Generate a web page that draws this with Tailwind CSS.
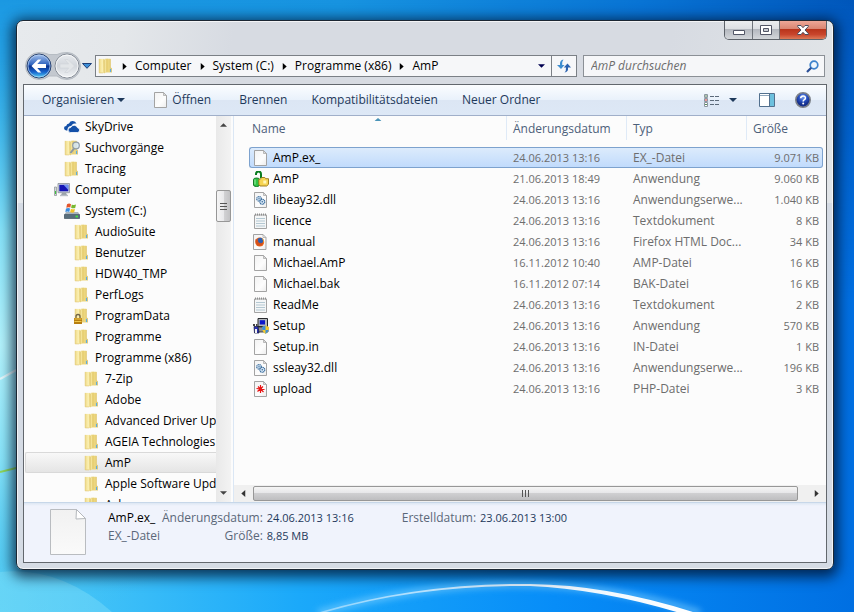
<!DOCTYPE html>
<html lang="de">
<head>
    <meta charset="UTF-8">
    <meta name="viewport" content="width=device-width, initial-scale=1.0">
    <title>AmP</title>
    <script src="https://cdn.jsdelivr.net/npm/@tailwindcss/browser@4"></script>
</head>
<body class="relative isolate flex h-screen overflow-hidden bg-[#0a84e6] pt-5 pr-5 pb-[42px] pl-4 font-['Open_Sans','Noto_Sans',sans-serif] text-[12px] leading-4 text-black">

    <!-- Desktop wallpaper -->
    <svg class="absolute inset-0 -z-10 h-full w-full" viewBox="0 0 854 612" preserveAspectRatio="none" aria-hidden="true">
        <defs>
            <linearGradient id="wpBottom"><stop offset="0" stop-color="#52cdf6"/><stop offset=".35" stop-color="#1ba9fa"/><stop offset=".65" stop-color="#078df8"/><stop offset="1" stop-color="#006fe2"/></linearGradient>
            <linearGradient id="wpTop"><stop offset="0" stop-color="#1b98e2"/><stop offset=".4" stop-color="#1793e0"/><stop offset=".75" stop-color="#0873d4"/><stop offset="1" stop-color="#0056ba"/></linearGradient>
            <linearGradient id="fade" x2="0" y2="1"><stop offset="0" stop-color="#fff"/><stop offset="1" stop-color="#fff" stop-opacity="0"/></linearGradient>
            <mask id="topMask"><rect width="854" height="300" fill="url(#fade)"/></mask>
            <radialGradient id="wpGlow" gradientUnits="userSpaceOnUse" cx="0" cy="345" r="285"><stop offset="0" stop-color="#b4f4fd"/><stop offset=".4" stop-color="#8ee8fb" stop-opacity=".9"/><stop offset="1" stop-color="#3cbcee" stop-opacity="0"/></radialGradient>
            <linearGradient id="arc"><stop offset="0" stop-color="#fff" stop-opacity=".4"/><stop offset=".6" stop-color="#fff" stop-opacity=".9"/><stop offset="1" stop-color="#fff"/></linearGradient>
            <filter id="soft" x="-10%" y="-50%" width="120%" height="200%"><feGaussianBlur stdDeviation="3"/></filter>
        </defs>
        <rect width="854" height="612" fill="url(#wpBottom)"/>
        <rect width="854" height="300" fill="url(#wpTop)" mask="url(#topMask)"/>
        <rect width="854" height="612" fill="url(#wpGlow)"/>
        <path d="M0 572Q60 566 112 612H0z" fill="#8ee4fa" opacity=".35"/>
        <path d="M318 613Q520 556 700 613" fill="none" stroke="#7fd0ff" stroke-width="7" opacity=".6" filter="url(#soft)"/>
        <path d="M320 612Q420 583 530 584Q610 585 696 613L680 613Q600 589 530 586Q420 585 326 612z" fill="url(#arc)"/>
        <path d="M0 379L20 368" stroke="#fff" stroke-width="2" opacity=".7"/>
        <path d="M0 472L20 467" stroke="#8fd85a" stroke-width="2"/>
    </svg>

    <!-- Icon set -->
    <svg class="absolute h-0 w-0" aria-hidden="true">
        <defs>
            <linearGradient id="gFold"><stop offset="0" stop-color="#f0db86"/><stop offset=".6" stop-color="#fbf0b4"/><stop offset="1" stop-color="#e6cd70"/></linearGradient>
            <linearGradient id="gFront"><stop offset="0" stop-color="#cfae48"/><stop offset=".35" stop-color="#f9eca8"/><stop offset="1" stop-color="#dfc25e"/></linearGradient>
            <linearGradient id="gPage" x2="1" y2="1"><stop offset="0" stop-color="#f2f2f2"/><stop offset=".6" stop-color="#fdfdfd"/><stop offset="1" stop-color="#ececec"/></linearGradient>
            <linearGradient id="gBack" x2="0" y2="1"><stop offset="0" stop-color="#a8c4ee"/><stop offset=".45" stop-color="#2d62bd"/><stop offset=".5" stop-color="#0a328c"/><stop offset=".75" stop-color="#1763cc"/><stop offset="1" stop-color="#58dcfb"/></linearGradient>
            <linearGradient id="gFwd" x2="0" y2="1"><stop offset="0" stop-color="#e8ebee"/><stop offset=".5" stop-color="#d2d6dc"/><stop offset="1" stop-color="#f2f4f6"/></linearGradient>
            <radialGradient id="gHelp" cy=".3"><stop offset="0" stop-color="#7ba0ee"/><stop offset=".6" stop-color="#2850c0"/><stop offset="1" stop-color="#16308c"/></radialGradient>
            <linearGradient id="gBig" x2="0" y2="1"><stop offset="0" stop-color="#f1f1f1"/><stop offset="1" stop-color="#fafafa"/></linearGradient>
        </defs>
        <symbol id="i-folder" viewBox="0 0 16 16">
            <path d="M7 .8h5.500v8.700l1.200.8v4.200H7z" fill="#ecd67e"/>
            <path d="M12.300 1v8.500l1.200.8v4" fill="none" stroke="#dcc064" stroke-width=".7"/>
            <path d="M1.200 .9h5.300v14H1.200z" fill="url(#gFold)"/>
            <path d="M1.200 .9v14h4" fill="none" stroke="#dfc36a" stroke-width=".6"/>
            <path d="M5.800 2.200L9.300.6v13L6 15.600z" fill="url(#gFront)"/>
            <path d="M12.500 10.800v3.200" stroke="#5cade6" stroke-width="1.100"/>
        </symbol>
        <symbol id="i-search-folder" viewBox="0 0 16 16">
            <use href="#i-folder"/>
            <path d="M10 8.500L6.500 13" stroke="#8a98a4" stroke-width="2"/>
            <circle cx="12" cy="5.500" r="3.300" fill="#d5e8f5" fill-opacity=".85" stroke="#8e9ca8" stroke-width="1.200"/>
        </symbol>
        <symbol id="i-lock-folder" viewBox="0 0 16 16">
            <use href="#i-folder"/>
            <path d="M2 10.500V8.500a2 2 0 0 1 4 0v2" fill="none" stroke="#6e6248" stroke-width="1.300"/>
            <path d="M0 10h8v6H0z" fill="#b77e10"/><path d="M.5 11h7M.5 13.500h7" stroke="#f0c84c"/>
        </symbol>
        <symbol id="i-sky" viewBox="0 0 16 16">
            <path d="M3.600 11.500H2.500a2.300 2.300 0 0 1-.3-4.600A3 3 0 0 1 5 4.500a4 4 0 0 1 7.500.300C9 4 7.500 6 7.400 7 5 6.800 3.200 9 3.600 11.500z" fill="#1450a8"/>
            <path d="M6.500 13.500a2.500 2.500 0 0 1 .2-5 3.700 3.700 0 0 1 6.900.3 2.400 2.400 0 0 1 .2 4.700z" fill="#1450a8" stroke="#fff" stroke-width=".8"/>
        </symbol>
        <symbol id="i-computer" viewBox="0 0 16 16">
            <path d="M.5 5h2v8.500h-2z" fill="#d4d8da" stroke="#8a9094" stroke-width=".7"/><path d="M1 9h1v3H1z" fill="#3ec23e"/>
            <path d="M4 1.500h11.500v9.200H4z" fill="#cfd6de" stroke="#868e98" stroke-width=".8"/>
            <path d="M5.300 2.800h9v6.500h-9z" fill="#1414b4"/><path d="M9.500 2.800h4.800V8z" fill="#6e90f0"/>
            <path d="M8 10.700h4l1 2.300H7z" fill="#9aa2aa"/><path d="M6 13.500h8" stroke="#b8bec4" stroke-width="1.400"/>
        </symbol>
        <symbol id="i-drive" viewBox="0 0 16 16">
            <path d="M2 9h12l2 3v3.500H0V12z" fill="#a9b4bc"/><path d="M.5 11.500h15v4H.5z" fill="#586e7c" stroke="#3f525e" stroke-width=".6"/>
            <path d="M11.500 13.500h2.500" stroke="#44e044" stroke-width="1.800"/>
            <path d="M3 1.300Q5 0 7 1.200L6.300 4.600Q4.500 3.800 2.300 4.700z" fill="#e4552c"/>
            <path d="M7.800 1.500Q10 2.500 12 1.600L11.200 5Q9 5.800 7.100 4.800z" fill="#78b830"/>
            <path d="M2 5.500Q4.300 4.600 6.100 5.500L5.300 9Q3.500 8 1.300 9z" fill="#3b8ee0"/>
            <path d="M6.900 5.700Q9 6.700 11 5.900L10.200 9.300Q8.300 10 6.100 9.200z" fill="#f4c22a"/>
        </symbol>
        <symbol id="i-file" viewBox="0 0 16 16">
            <path d="M1.500.5h9l3 3v12h-12z" fill="url(#gPage)" stroke="#a3a3a3"/>
            <path d="M10.500.5v3h3z" fill="#dcdcdc" stroke="#a3a3a3" stroke-width=".7"/>
        </symbol>
        <symbol id="i-text" viewBox="0 0 16 16">
            <path d="M1.500 2h12v13.500h-12z" fill="#f4f6f7" stroke="#a3a3a3"/>
            <path d="M2 1.500h11" stroke="#8f8f8f" stroke-width="2" stroke-dasharray="1 1"/>
            <path d="M3 5.500h9M3 8h9M3 10.500h9M3 13h9" stroke="#b4c8d2"/>
        </symbol>
        <symbol id="i-dll" viewBox="0 0 16 16">
            <use href="#i-file"/>
            <circle cx="6" cy="6.800" r="2.300" fill="#d6e6f4" stroke="#3c6e9e" stroke-width="1.200" stroke-dasharray="1.200 .5"/><circle cx="6" cy="6.800" r=".7" fill="#3c6e9e"/>
            <circle cx="9.300" cy="9.800" r="2.500" fill="#d6e6f4" stroke="#3c6e9e" stroke-width="1.200" stroke-dasharray="1.200 .5"/><circle cx="9.300" cy="9.800" r=".8" fill="#3c6e9e"/>
        </symbol>
        <symbol id="i-firefox" viewBox="0 0 16 16">
            <path d="M.5.5h9.500l3 3v12H.5z" fill="url(#gPage)" stroke="#a3a3a3"/><path d="M10 .5v3h3" fill="none" stroke="#a3a3a3" stroke-width=".7"/>
            <circle cx="6.700" cy="8" r="4.500" fill="#e8641c"/><circle cx="7.300" cy="6.700" r="2.900" fill="#2f5fae"/>
            <path d="M2.500 5Q4 6 5 6.300Q4.500 8.500 7 9.300Q9 9.700 10.300 7.500Q10 11.500 6.500 11.800Q2.300 11.500 2.500 5z" fill="#d4501a"/>
            <path d="M9.800 4.300Q12 7 10.600 10Q10.800 6.500 9 4.600z" fill="#f8b43c"/>
        </symbol>
        <symbol id="i-amp" viewBox="0 0 16 16">
            <path d="M3 4V3a2.500 2.500 0 0 1 5 0v4" fill="none" stroke="#0a7c20" stroke-width="2"/>
            <path d="M.5 8.500Q.5 7 3.500 7t3 1.500V14q0 1.500-3 1.500t-3-1.500z" fill="#2fc244" stroke="#0a6c1c" stroke-width=".9"/>
            <path d="M2 8.500v5" stroke="#9cf0a4"/>
            <path d="M5.800 13.300V8.500l2-.8 1-1.200h3l.9 1.200h2.800v5.600l-1.800 1.700H7z" fill="#f6d452" stroke="#967414" stroke-width=".9"/>
            <path d="M10.300 9.500h3v3h-3z" fill="#fff6ba"/>
        </symbol>
        <symbol id="i-setup" viewBox="0 0 16 16">
            <path d="M5 .5h9.500v8H5z" fill="#b4b8bc" stroke="#26282c"/><path d="M6.700 2.200h5.300v4.300H6.700z" fill="#0c18cc"/>
            <path d="M4 9h11v5H4z" fill="#8a8e92" stroke="#26282c" stroke-width=".8"/>
            <path d="M0 6h2v2H0zM3 6h1.500v2H3z" fill="#444"/><path d="M1 8.500h4l1 6.500H1.500z" fill="#2830b4" stroke="#101438" stroke-width=".7"/><path d="M2 11h2v4H2z" fill="#f4f4f4"/>
            <path d="M9 9l3.500-1.500L16 9q0 5-3.500 7Q9 14 9 9z" fill="#f5cc30"/><path d="M12.500 7.500L9 9q0 1.500.4 3h3.100zM12.500 12h3.100q-.8 2.700-3.100 4z" fill="#3f8fd6"/>
        </symbol>
        <symbol id="i-php" viewBox="0 0 16 16">
            <use href="#i-file"/>
            <path d="M7.500 4v8M3.500 7.500l8 1M4.500 10.500L10 5.500M5 5.500l5.500 5.500" stroke="#e81414" stroke-width="1.200"/><circle cx="7.500" cy="8" r="1.600" fill="#e81414"/>
        </symbol>
        <symbol id="i-down" viewBox="0 0 8 4"><path d="M0 0h8L4 4z" fill="currentColor"/></symbol>
        <symbol id="i-right" viewBox="0 0 5 8"><path d="M.5 0L5 4 .5 8z" fill="currentColor"/></symbol>
    </svg>

    <main class="flex min-w-0 flex-1 flex-col rounded-[7px] border border-[#1c2733] bg-[linear-gradient(to_bottom,transparent_182px,#d5dbe4_182px),linear-gradient(100deg,#e7eaed_0,#e4e7ea_12%,#d7dbe2_24%,#d7dbe2_72%,#e6e9ea_100%)] px-[6px] pb-[6px] shadow-[inset_0_0_0_1px_#ffffffb0,0_3px_13px_4px_#000f26c0]">

        <!-- Caption buttons -->
        <header class="flex h-8 shrink-0 items-start justify-end">
            <div class="flex h-[19px] w-[103px] overflow-hidden rounded-b-[5px] border border-t-0 border-[#5d6269]">
                <button type="button" aria-label="Minimieren" class="flex w-[28px] items-center justify-center border-r border-[#6f747b] bg-[linear-gradient(#eceef0_0,#dcdfe3_45%,#b4b8bf_46%,#d3d6da_100%)] pt-[5px]">
                    <svg class="h-[5px] w-3" viewBox="0 0 12 5"><path d="M.5.500h11v4H.500z" fill="#fff" stroke="#525666"/></svg>
                </button>
                <button type="button" aria-label="Maximieren" class="flex w-[27px] items-center justify-center border-r border-[#6f747b] bg-[linear-gradient(#eceef0_0,#dcdfe3_45%,#b4b8bf_46%,#d3d6da_100%)]">
                    <svg class="h-[10px] w-3" viewBox="0 0 12 10"><path d="M.5.500h11v9H.500z" fill="#fff" stroke="#525666"/><path d="M3.500 3.500h5v3h-5z" fill="#c8ccd2" stroke="#525666"/></svg>
                </button>
                <button type="button" aria-label="Schließen" class="flex flex-1 items-center justify-center bg-[linear-gradient(#eda797_0,#d98470_45%,#b8331a_46%,#c8452c_75%,#dd7a58_100%)]">
                    <svg class="h-[10px] w-3" viewBox="0 0 12 10"><path d="M.700.500H4L6 2.700 8 .500h3.300v1L8 5l3.300 3.500v1H8L6 7.300 4 9.500H.700v-1L4 5 .700 1.500z" fill="#fff" stroke="#4a4d5e"/></svg>
                </button>
            </div>
        </header>

        <!-- Address bar -->
        <nav class="mb-[5px] flex h-[26px] shrink-0 items-center px-[2px]">
            <div class="relative flex w-[54px]">
                <svg class="absolute -top-[1px] h-7 w-[56px]" viewBox="0 0 56 28"><path d="M14 .5Q20 .5 24 2.500h8Q36 .5 42 .5a13.500 13.500 0 0 1 0 27Q36 27.500 32 24h-8Q20 27.500 14 27.500A13.500 13.500 0 0 1 14 .5z" fill="#c3c8cf" stroke="#b6bcc3"/></svg>
                <button type="button" aria-label="Zurück" class="relative ml-[1px]">
                    <svg class="h-[26px] w-[26px]" viewBox="0 0 26 26"><circle cx="13" cy="13" r="12" fill="url(#gBack)" stroke="#2b4470"/><circle cx="13" cy="13" r="11" fill="none" stroke="#bcd4f4" stroke-opacity=".7"/><path d="M5.500 13L12 6.500h3.300L11.300 11H20v4h-8.700l4 4.500H12z" fill="#fff"/></svg>
                </button>
                <button type="button" aria-label="Vorwärts" class="relative ml-[2px]">
                    <svg class="h-[26px] w-[26px]" viewBox="0 0 26 26"><circle cx="13" cy="13" r="12" fill="url(#gFwd)" stroke="#858c96"/><circle cx="13" cy="13" r="11" fill="none" stroke="#fff" stroke-opacity=".7"/><path d="M20.500 13L14 6.500h-3.300l4 4.500H6v4h8.700l-4 4.500H14z" fill="#e2e5e8" stroke="#d0d4d9" stroke-width=".6"/></svg>
                </button>
            </div>
            <button type="button" aria-label="Letzte Orte" class="flex w-4 justify-center"><svg class="h-[6px] w-[10px]" viewBox="0 0 10 6"><path d="M.5.500h9L5 5.300z" fill="#3d8fd8" stroke="#1d3f78"/></svg></button>

            <div class="flex h-[22px] min-w-0 flex-1 border border-[#7b8086] bg-[#f6f7f9]">
                <ol id="crumbs" class="flex min-w-0 flex-1 items-center pl-[2px]">
                    <li><svg class="h-4 w-4"><use href="#i-folder"/></svg></li>
                </ol>
                <button type="button" aria-label="Vorherige Orte" class="flex w-5 items-center justify-center text-[#000050]"><svg class="h-1 w-[7px]"><use href="#i-down"/></svg></button>
                <button type="button" aria-label="Aktualisieren" class="flex w-[25px] items-center justify-center border-l border-[#7b8086]">
                    <svg class="h-[14px] w-[14px]" viewBox="0 0 14 14"><path d="M6.500.5Q2.500 1 3 6H0l4 4 3.500-4H5.200Q4.800 2.500 6.500.5z" fill="#3e8ed0"/><path d="M7.500 13.500Q11.500 13 11 8.500h3L10.500 4.500 6.800 8.500H9Q9.300 12 7.500 13.500z" fill="#2a62b0"/></svg>
                </button>
            </div>
            <form class="ml-[6px] flex h-[22px] w-[242px] shrink-0 items-center border border-[#8b9096] bg-[#f6f7f9] pr-[5px] pl-[7px]" onsubmit="return false">
                <input type="text" aria-label="AmP durchsuchen" placeholder="AmP durchsuchen" class="min-w-0 flex-1 italic outline-none placeholder:text-[#6d6d6d]">
                <button type="submit" aria-label="Suchen"><svg class="h-[13px] w-[13px]" viewBox="0 0 13 13"><circle cx="8" cy="5" r="3.800" fill="#eef6fd" stroke="#3d82cc" stroke-width="1.700"/><path d="M5.200 7.800L1 12" stroke="#2a4e96" stroke-width="2.200"/></svg></button>
            </form>
        </nav>

        <section class="flex min-h-0 flex-1 flex-col border border-[#62676d] bg-[#fcfcfc]">

            <!-- Toolbar -->
            <div role="toolbar" class="flex h-[31px] shrink-0 items-center border-b border-[#a0afc9] bg-[linear-gradient(#fbfdff_0,#e9f1fb_50%,#dce6f4_51%,#dde8f6_100%)] pl-[18px] text-[#1e395b]">
                <button type="button" class="flex items-center gap-[3px]">Organisieren <svg class="h-1 w-2"><use href="#i-down"/></svg></button>
                <button type="button" class="ml-7 flex items-center gap-[3px]"><svg class="h-4 w-4"><use href="#i-file"/></svg>Öffnen</button>
                <button type="button" class="ml-7">Brennen</button>
                <button type="button" class="ml-6">Kompatibilitätsdateien</button>
                <button type="button" class="ml-6">Neuer Ordner</button>
                <div class="ml-auto flex items-center pr-[15px]">
                    <button type="button" aria-label="Ansicht"><svg class="h-[13px] w-[15px]" viewBox="0 0 15 13"><path d="M.5.500h3v3h-3zM.5 4.500h3v3h-3zM.5 8.500h3v4h-3z" fill="#fff" stroke="#8c96a0"/><path d="M1 1.500h2v1H1zM1 10h2v1H1z" fill="#5a8a5a"/><path d="M1 5.500h2v1H1z" fill="#d03030"/><path d="M6 2.500h4M11 2.500h4M6 6.500h4M11 6.500h4M6 10.500h4M11 10.500h4" stroke="#5c6a7a"/></svg></button>
                    <button type="button" aria-label="Weitere Optionen" class="ml-[10px]"><svg class="h-1 w-2"><use href="#i-down"/></svg></button>
                    <button type="button" aria-label="Vorschaufenster" class="ml-[22px]"><svg class="h-[14px] w-4" viewBox="0 0 16 14"><path d="M.5.500h15v13H.500z" fill="#fff" stroke="#52708e"/><path d="M1 2.500h14" stroke="#8fa6bc"/><path d="M10.500 1v12.500" stroke="#52708e"/><path d="M11 1h4v12h-4z" fill="#6cc0de"/></svg></button>
                    <button type="button" aria-label="Hilfe" class="ml-5"><svg class="h-4 w-4" viewBox="0 0 16 16"><circle cx="8" cy="8" r="7.200" fill="url(#gHelp)" stroke="#7c8088" stroke-width="1.600"/><path d="M5.700 6.300Q5.800 4 8.100 4T10.400 6Q10.400 7.200 9.100 7.900Q8.200 8.400 8.200 9.400" fill="none" stroke="#fff" stroke-width="1.600"/><circle cx="8.200" cy="11.600" r="1" fill="#fff"/></svg></button>
                </div>
            </div>

            <div class="flex min-h-0 flex-1">
                <!-- Folder tree -->
                <ul id="tree" class="w-[192px] shrink-0 overflow-hidden pl-[1px]"></ul>
                <div class="flex w-[15px] shrink-0 flex-col items-center bg-[linear-gradient(to_right,#e9e9e9,#f3f3f3)] py-[7px]">
                    <svg class="h-1 w-[7px] shrink-0 rotate-180 text-[#444]"><use href="#i-down"/></svg>
                    <div class="mt-[63px] flex h-8 w-[15px] flex-col items-center justify-center gap-[2px] rounded-[2px] border border-[#979797] bg-[linear-gradient(to_right,#f5f5f5_0,#e9e9eb_50%,#d3d3d5_51%,#c2c2c4_100%)]">
                        <i class="h-px w-[7px] bg-[#555]"></i><i class="h-px w-[7px] bg-[#555]"></i><i class="h-px w-[7px] bg-[#555]"></i>
                    </div>
                    <svg class="mt-auto h-1 w-[7px] shrink-0 text-[#444]"><use href="#i-down"/></svg>
                </div>

                <!-- File list -->
                <div class="ml-[2px] flex min-w-0 flex-1 flex-col border-l border-[#dbe7f5]">
                    <div class="min-h-0 flex-1 overflow-hidden pr-[3px] pl-[15px]">
                        <table class="w-full table-fixed border-separate border-spacing-0 text-left text-[#6d6d6d]">
                            <colgroup><col><col class="w-[120px]"><col class="w-[120px]"><col class="w-[77px]"></colgroup>
                            <thead class="text-[#4c607a]">
                                <tr>
                                    <th class="relative h-[31px] p-0 align-top font-normal"><div class="flex h-6 items-center pt-[2px] pl-[3px]">Name</div><svg class="absolute top-[2px] left-1/2 h-[3px] w-[7px] -translate-x-1/2" viewBox="0 0 7 3"><path d="M3.500 0L7 3H0z" fill="#4a94b8"/></svg></th>
                                    <th class="p-0 align-top font-normal"><div class="flex h-6 items-center border-l border-[#dfeaf7] pt-[2px] pl-[6px]">Änderungsdatum</div></th>
                                    <th class="p-0 align-top font-normal"><div class="flex h-6 items-center border-l border-[#dfeaf7] pt-[2px] pl-[6px]">Typ</div></th>
                                    <th class="p-0 align-top font-normal"><div class="flex h-6 items-center border-l border-[#dfeaf7] pt-[2px] pl-[6px]">Größe</div></th>
                                </tr>
                            </thead>
                            <tbody id="files"></tbody>
                        </table>
                    </div>
                    <div class="flex h-[17px] shrink-0 items-center bg-[#f0f0f0] px-[7px] text-[#333]">
                        <svg class="h-[7px] w-[5px] shrink-0 rotate-180"><use href="#i-right"/></svg>
                        <div class="ml-[7px] flex h-[15px] min-w-0 flex-1 items-center justify-center gap-[2px] rounded-[2px] border border-[#979797] bg-[linear-gradient(#f5f5f5_0,#e6e6e8_48%,#cfcfd1_50%,#bebec0_100%)]">
                            <i class="h-[7px] w-px bg-[#555]"></i><i class="h-[7px] w-px bg-[#555]"></i><i class="h-[7px] w-px bg-[#555]"></i>
                        </div>
                        <svg class="ml-4 h-[7px] w-[5px] shrink-0"><use href="#i-right"/></svg>
                    </div>
                </div>
            </div>

            <!-- Details pane -->
            <footer class="flex h-[60px] shrink-0 items-start border-t border-[#c7d7e9] bg-[linear-gradient(#dde7f3_0,#f0f3fc_3px)] pl-[26px] text-[#5a6779]">
                <svg class="mt-[6px] h-[46px] w-9 shrink-0" viewBox="0 0 36 46"><path d="M.5.500h26l9 9v36H.500z" fill="url(#gBig)" stroke="#b9bcc0"/><path d="M26.500.5l-.5 9.500 9.500-.500z" fill="#fff" stroke="#b4b7bb"/></svg>
                <div class="mt-[6px] ml-[22px] w-[54px] leading-[18px]"><p class="text-black">AmP.ex_</p><p>EX_-Datei</p></div>
                <dl class="mt-[6px] grid grid-cols-[auto_131px_auto_auto] gap-x-[4px] leading-[18px]">
                    <dt class="text-right">Änderungsdatum:</dt><dd class="text-[11px] text-[#1e395b]">24.06.2013 13:16</dd>
                    <dt>Erstelldatum:</dt><dd class="text-[11px] text-[#1e395b]">23.06.2013 13:00</dd>
                    <dt class="text-right">Größe:</dt><dd class="text-[11px] text-[#1e395b]">8,85 MB</dd>
                </dl>
            </footer>
        </section>
    </main>

    <script>
        var crumbs = ['Computer', 'System (C:)', 'Programme (x86)', 'AmP'];
        // [indent, icon, label]
        var folders = [
            [39, 'sky', 'SkyDrive'],
            [39, 'search-folder', 'Suchvorgänge'],
            [39, 'folder', 'Tracing'],
            [29, 'computer', 'Computer'],
            [39, 'drive', 'System (C:)'],
            [49, 'folder', 'AudioSuite'],
            [49, 'folder', 'Benutzer'],
            [49, 'folder', 'HDW40_TMP'],
            [49, 'folder', 'PerfLogs'],
            [49, 'lock-folder', 'ProgramData'],
            [49, 'folder', 'Programme'],
            [49, 'folder', 'Programme (x86)'],
            [59, 'folder', '7-Zip'],
            [59, 'folder', 'Adobe'],
            [59, 'folder', 'Advanced Driver Updater'],
            [59, 'folder', 'AGEIA Technologies'],
            [59, 'folder', 'AmP'],
            [59, 'folder', 'Apple Software Update'],
            [59, 'folder', 'Ask']
        ];
        var files = [
            ['file', 'AmP.ex_', '24.06.2013 13:16', 'EX_-Datei', '9.071 KB'],
            ['amp', 'AmP', '21.06.2013 18:49', 'Anwendung', '9.060 KB'],
            ['dll', 'libeay32.dll', '24.06.2013 13:16', 'Anwendungserwe...', '1.040 KB'],
            ['text', 'licence', '24.06.2013 13:16', 'Textdokument', '8 KB'],
            ['firefox', 'manual', '24.06.2013 13:16', 'Firefox HTML Doc...', '34 KB'],
            ['file', 'Michael.AmP', '16.11.2012 10:40', 'AMP-Datei', '16 KB'],
            ['file', 'Michael.bak', '16.11.2012 07:14', 'BAK-Datei', '16 KB'],
            ['text', 'ReadMe', '24.06.2013 13:16', 'Textdokument', '2 KB'],
            ['setup', 'Setup', '24.06.2013 13:16', 'Anwendung', '570 KB'],
            ['file', 'Setup.in', '24.06.2013 13:16', 'IN-Datei', '1 KB'],
            ['dll', 'ssleay32.dll', '24.06.2013 13:16', 'Anwendungserwe...', '196 KB'],
            ['php', 'upload', '24.06.2013 13:16', 'PHP-Datei', '3 KB']
        ];

        document.getElementById('crumbs').innerHTML += crumbs.map(name =>
            `<li class="flex items-center whitespace-nowrap"><svg class="mx-[8px] h-[7px] w-[5px]"><use href="#i-right"/></svg><a href="#">${name}</a></li>`
        ).join('');

        document.getElementById('tree').innerHTML = folders.map(([indent, icon, name]) => {
            var active = indent == 59 && name == 'AmP' ? 'rounded-l-[2px] border border-r-0 border-[#d9d9d9] bg-linear-to-b from-[#f8f8f8] to-[#e5e5e5]' : 'border border-r-0 border-transparent';
            return `<li class="flex h-[21px] items-center gap-[5px] whitespace-nowrap ${active}" style="padding-left:${indent - 1}px"><svg class="h-4 w-4 shrink-0"><use href="#i-${icon}"/></svg><a href="#">${name}</a></li>`;
        }).join('');

        document.getElementById('files').innerHTML = files.map(([icon, name, date, type, size], i) => {
            var cell = i == 0 ? 'h-[21px] border-y border-[#7da2ce] bg-linear-to-b from-[#dcebfc] to-[#c1dbfc] p-0' : 'h-[21px] border-y border-transparent p-0';
            return `<tr>
                <td class="${cell} rounded-l-[3px] border-l text-black"><div class="flex items-center gap-[4px] pl-[3px]"><svg class="h-4 w-4"><use href="#i-${icon}"/></svg>${name}</div></td>
                <td class="${cell} pl-[7px] text-[11px]">${date}</td>
                <td class="${cell} truncate pl-[7px]">${type}</td>
                <td class="${cell} rounded-r-[3px] border-r pr-[3px] text-right text-[11px]">${size}</td>
            </tr>`;
        }).join('');
    </script>
</body>
</html>
